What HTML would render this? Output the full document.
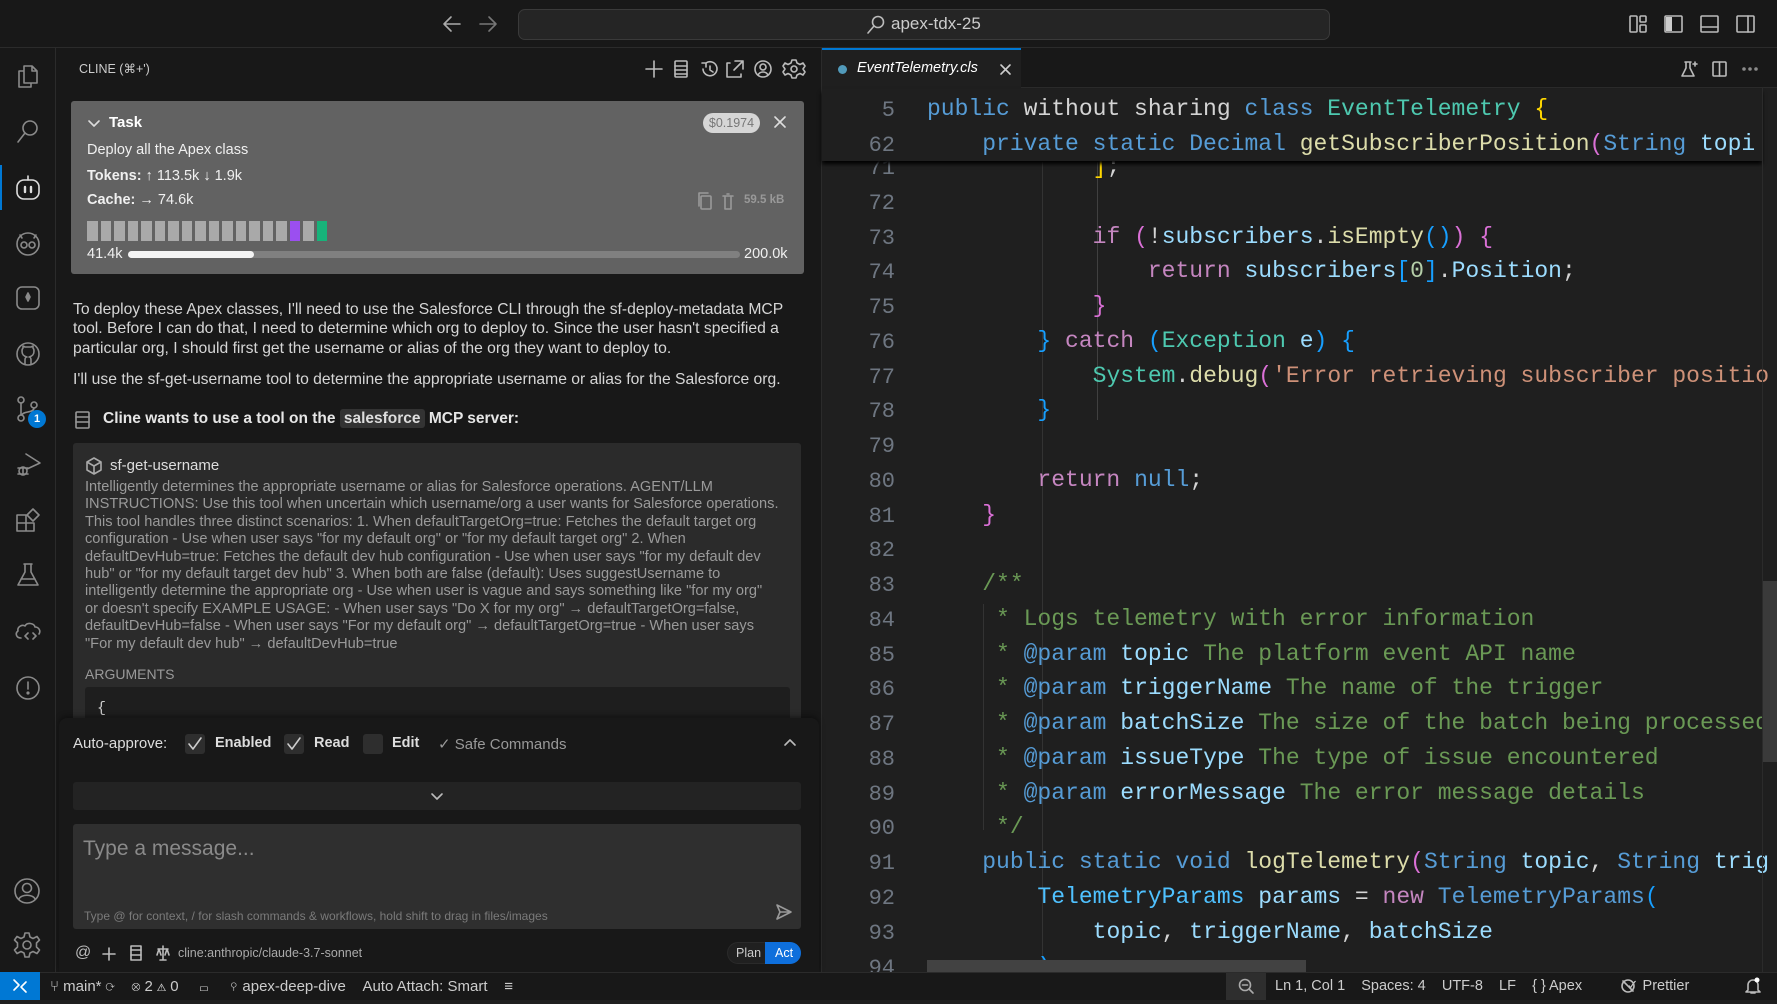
<!DOCTYPE html>
<html><head><meta charset="utf-8">
<style>
*{margin:0;padding:0;box-sizing:border-box}
body{width:1777px;height:1000px;overflow:hidden;background:#1f1f1f;font-family:"Liberation Sans",sans-serif;color:#ccc;position:relative}
.a{position:absolute}
.nw{white-space:nowrap}
svg{position:absolute;overflow:visible}
.ic{fill:none;stroke:#8a8a8a;stroke-width:1.6;stroke-linecap:round;stroke-linejoin:round}
.code{font-family:"Liberation Mono",monospace;font-size:23px;white-space:pre;color:#d4d4d4}
.ln{position:absolute;left:822px;width:73px;text-align:right;font-family:"Liberation Mono",monospace;font-size:22px;color:#6e7681}
.k{color:#569cd6}.t{color:#4ec9b0}.f{color:#dcdcaa}.v{color:#9cdcfe}.s{color:#ce9178}.c{color:#6a9955}.g{color:#ffd700}.p{color:#da70d6}.b{color:#179fff}.cf{color:#c586c0}.w{color:#d4d4d4}
#cd{position:absolute;left:0;top:4px;width:1777px;height:1000px}
</style></head><body>
<!-- title bar -->
<div class="a" style="left:0;top:0;width:1777px;height:48px;background:#181818;border-bottom:1px solid #2b2b2b"></div>
<svg style="left:442px;top:14px" width="60" height="20" class="ic"><path d="M2 10H18M2 10L9 3M2 10L9 17" stroke="#aaa"/><path d="M38 10H54M54 10L47 3M54 10L47 17" stroke="#777"/></svg>
<div class="a" style="left:518px;top:9px;width:812px;height:31px;background:#252525;border:1px solid #3a3a3a;border-radius:7px"></div>
<svg style="left:866px;top:15px" width="20" height="20" class="ic"><circle cx="12" cy="7" r="5.5" stroke="#bbb"/><path d="M8 11L2 18" stroke="#bbb"/></svg>
<div class="a nw" style="left:891px;top:14px;font-size:17px;color:#ccc">apex-tdx-25</div>
<svg style="left:1629px;top:14px" width="130" height="20" class="ic" stroke="#bbb"><rect x="1" y="2" width="7" height="16" rx="1" stroke="#bbb"/><rect x="11" y="2" width="6" height="6" rx="1" stroke="#bbb"/><rect x="11" y="11" width="6" height="7" rx="1" stroke="#bbb"/><rect x="36" y="2" width="17" height="16" rx="1" stroke="#bbb"/><rect x="37" y="3" width="6" height="14" fill="#ccc" stroke="none"/><rect x="72" y="2" width="17" height="16" rx="1" stroke="#bbb"/><path d="M72 13H89" stroke="#bbb"/><rect x="108" y="2" width="17" height="16" rx="1" stroke="#bbb"/><path d="M119 2V18" stroke="#bbb"/></svg>

<!-- activity bar -->
<div class="a" style="left:0;top:48px;width:56px;height:924px;background:#181818;border-right:1px solid #2b2b2b"></div>
<div class="a" style="left:0;top:165px;width:2px;height:45px;background:#0078d4"></div>
<svg style="left:15px;top:63px" width="26" height="26" class="ic"><path d="M9 3H17L22 8V20H9Z M17 3V8H22 M9 8H4V24H16V20"/></svg>
<svg style="left:15px;top:118px" width="26" height="26" class="ic"><circle cx="15" cy="10" r="7"/><path d="M10 15L3 24"/></svg>
<svg style="left:14px;top:174px" width="28" height="28" class="ic" ><rect x="3" y="6" width="22" height="19" rx="7" stroke="#ddd"/><path d="M14 6V2" stroke="#ddd"/><path d="M11 13V18M17 13V18" stroke="#ddd" stroke-width="2.4"/></svg>
<svg style="left:14px;top:230px" width="28" height="28" class="ic"><circle cx="14" cy="14" r="11"/><circle cx="10" cy="15" r="3"/><circle cx="18" cy="15" r="3"/><path d="M6 5L8 8M22 5L20 8"/></svg>
<svg style="left:15px;top:285px" width="26" height="26" class="ic"><rect x="2" y="2" width="22" height="22" rx="5"/><path d="M13 8L15 12L13 16L11 12Z" fill="#8a8a8a"/></svg>
<svg style="left:15px;top:341px" width="26" height="26" class="ic"><circle cx="13" cy="13" r="11"/><path d="M10 23V19C10 17 11 16 12 16C8 15 7 13 7 10C7 8 8 7 8 7L8 5L10 6H16L18 5V7C18 7 19 8 19 10C19 13 18 15 14 16C15 16 16 17 16 19V23"/></svg>
<svg style="left:15px;top:396px" width="26" height="26" class="ic"><circle cx="6" cy="4" r="3"/><circle cx="6" cy="22" r="3"/><circle cx="19" cy="9" r="3"/><path d="M6 7V19M19 12C19 17 8 15 7 19"/></svg>
<div class="a" style="left:28px;top:410px;width:18px;height:18px;border-radius:9px;background:#0078d4;color:#fff;font-size:11px;font-weight:bold;text-align:center;line-height:18px">1</div>
<svg style="left:14px;top:451px" width="28" height="28" class="ic"><path d="M12 3L26 12L13 18"/><circle cx="9" cy="20" r="4"/><path d="M4 17H14M4 23H14M9 16V24"/></svg>
<svg style="left:15px;top:507px" width="26" height="26" class="ic"><path d="M2 8H11V24H2Z M2 16H19V24H11"/><path d="M18 2L24 8L18 14L12 8Z"/></svg>
<svg style="left:15px;top:562px" width="26" height="26" class="ic"><path d="M9 2H17M10 2V10L3 23H23L16 10V2M6 17H20"/></svg>
<svg style="left:13px;top:618px" width="30" height="26" class="ic"><path d="M8 20C3 20 2 15 5 13C4 9 9 6 12 8C14 4 21 5 22 9C26 9 28 13 26 16"/><path d="M15 15L12 18L15 21M20 15L23 18L20 21"/></svg>
<svg style="left:15px;top:675px" width="26" height="26" class="ic"><circle cx="13" cy="13" r="11"/><path d="M13 7V14"/><circle cx="13" cy="18" r="0.8" fill="#8a8a8a"/></svg>
<svg style="left:13px;top:877px" width="28" height="28" class="ic"><circle cx="14" cy="14" r="12"/><circle cx="14" cy="11" r="4.5"/><path d="M6 22C8 17 20 17 22 22"/></svg>
<svg style="left:13px;top:931px" width="28" height="28" class="ic"><circle cx="14" cy="14" r="4"/><path d="M12 2H16L17 6L20 7.5L24 5.5L26.5 9L23.5 12V16L26.5 19L24 22.5L20 20.5L17 22L16 26H12L11 22L8 20.5L4 22.5L1.5 19L4.5 16V12L1.5 9L4 5.5L8 7.5L11 6Z"/></svg>

<!-- cline panel -->
<div class="a" style="left:56px;top:48px;width:766px;height:924px;background:#181818;border-right:1px solid #2b2b2b"></div>
<div class="a nw" style="left:79px;top:61px;font-size:12.5px;color:#ccc">CLINE (⌘+')</div>
<svg style="left:645px;top:59px" width="160" height="20" class="ic" stroke="#bbb"><path d="M9 2V18M1 10H17" stroke="#bbb"/><rect x="30" y="2" width="12" height="16" rx="1" stroke="#bbb"/><path d="M30 7H42M30 11H42M30 15H42" stroke="#bbb"/><path d="M61 4A7 7 0 1 1 58 10M61 4H57M61 4V8M65 7V11L68 13" stroke="#bbb"/><path d="M85 4H82V18H96V15M90 2H98V10M98 2L89 11" stroke="#bbb"/><circle cx="118" cy="10" r="8" stroke="#bbb"/><circle cx="118" cy="8" r="3" stroke="#bbb"/><path d="M113 16C115 12 121 12 123 16" stroke="#bbb"/><circle cx="149" cy="10" r="3" stroke="#bbb"/><path d="M147 1H151L152 4L155 5.5L158 4L160 7L158 10L160 13L158 16L155 14.5L152 16L151 19H147L146 16L143 14.5L140 16L138 13L140 10L138 7L140 4L143 5.5L146 4Z" stroke="#bbb"/></svg>

<!-- task box -->
<div class="a" style="left:71px;top:101px;width:733px;height:173px;background:#626262;border-radius:3px"></div>
<svg style="left:88px;top:119px" width="12" height="10" class="ic" stroke="#ddd"><path d="M1 2L6 7L11 2" stroke="#ddd"/></svg>
<div class="a nw" style="left:109px;top:114px;font-size:15px;font-weight:bold;color:#fff">Task</div>
<div class="a nw" style="left:703px;top:113px;width:57px;height:20px;border-radius:10px;background:#d6d6d6;color:#777;font-size:12.5px;text-align:center;line-height:20px">$0.1974</div>
<svg style="left:774px;top:116px" width="12" height="12" class="ic" stroke="#ddd"><path d="M1 1L11 11M11 1L1 11" stroke="#ddd"/></svg>
<div class="a nw" style="left:87px;top:142px;font-size:14.5px;color:#f0f0f0">Deploy all the Apex class</div>
<div class="a nw" style="left:87px;top:168px;font-size:14.5px;color:#f0f0f0"><b>Tokens:</b> ↑ 113.5k ↓ 1.9k</div>
<div class="a nw" style="left:87px;top:192px;font-size:14.5px;color:#f0f0f0"><b>Cache:</b> → 74.6k</div>
<svg style="left:698px;top:192px" width="40" height="18" class="ic" stroke="#999"><rect x="3" y="4" width="10" height="13" rx="1" stroke="#999"/><path d="M1 14V1H10" stroke="#999"/><path d="M25 4H35M27 4V17H33V4M29 2H31" stroke="#999"/></svg>
<div class="a nw" style="left:744px;top:194px;font-size:11.5px;color:#999;font-weight:bold">59.5 kB</div>
<div class="a" style="left:87px;top:221px;height:20px;display:flex;gap:3px">
<i style="width:10.5px;background:#a9a9a9"></i><i style="width:10.5px;background:#a9a9a9"></i><i style="width:10.5px;background:#a9a9a9"></i><i style="width:10.5px;background:#a9a9a9"></i><i style="width:10.5px;background:#a9a9a9"></i><i style="width:10.5px;background:#a9a9a9"></i><i style="width:10.5px;background:#a9a9a9"></i><i style="width:10.5px;background:#a9a9a9"></i><i style="width:10.5px;background:#a9a9a9"></i><i style="width:10.5px;background:#a9a9a9"></i><i style="width:10.5px;background:#a9a9a9"></i><i style="width:10.5px;background:#a9a9a9"></i><i style="width:10.5px;background:#a9a9a9"></i><i style="width:10.5px;background:#a9a9a9"></i><i style="width:10.5px;background:#a9a9a9"></i><i style="width:10.5px;background:#9b4ff0"></i><i style="width:10.5px;background:#a9a9a9"></i><i style="width:10.5px;background:#17b37a"></i>
</div>
<div class="a nw" style="left:87px;top:246px;font-size:14.5px;color:#f0f0f0">41.4k</div>
<div class="a" style="left:128px;top:251px;width:612px;height:7px;border-radius:4px;background:#808080"></div>
<div class="a" style="left:128px;top:251px;width:126px;height:7px;border-radius:4px;background:#f4f4f4"></div>
<div class="a nw" style="left:744px;top:246px;font-size:14.5px;color:#f0f0f0">200.0k</div>

<!-- messages -->
<div class="a nw" style="left:73px;top:300px;font-size:15.7px;line-height:19.3px;color:#d6d6d6">To deploy these Apex classes, I'll need to use the Salesforce CLI through the sf-deploy-metadata MCP<br>tool. Before I can do that, I need to determine which org to deploy to. Since the user hasn't specified a<br>particular org, I should first get the username or alias of the org they want to deploy to.</div>
<div class="a nw" style="left:73px;top:371px;font-size:15.7px;color:#d6d6d6">I'll use the sf-get-username tool to determine the appropriate username or alias for the Salesforce org.</div>
<svg style="left:75px;top:411px" width="16" height="18" class="ic" stroke="#999"><rect x="1" y="1" width="13" height="16" rx="1" stroke="#999"/><path d="M1 6H14M1 11H14" stroke="#999"/></svg>
<div class="a nw" style="left:103px;top:410px;font-size:15.5px;font-weight:bold;color:#e6e6e6">Cline wants to use a tool on the <span style="background:#333;border-radius:3px;padding:1px 4px;color:#ddd">salesforce</span> MCP server:</div>
<div class="a" style="left:73px;top:443px;width:728px;height:290px;background:#2b2b2b;border-radius:3px"></div>
<svg style="left:86px;top:457px" width="16" height="18" class="ic" stroke="#aaa"><path d="M8 1L15 5V13L8 17L1 13V5Z M1 5L8 9L15 5M8 9V17" stroke="#aaa"/></svg>
<div class="a nw" style="left:110px;top:457px;font-size:15px;color:#ddd">sf-get-username</div>
<div class="a nw" style="left:85px;top:479px;font-size:14.6px;line-height:17.4px;color:#9a9a9a">Intelligently determines the appropriate username or alias for Salesforce operations. AGENT/LLM<br>INSTRUCTIONS: Use this tool when uncertain which username/org a user wants for Salesforce operations.<br>This tool handles three distinct scenarios: 1. When defaultTargetOrg=true: Fetches the default target org<br>configuration - Use when user says "for my default org" or "for my default target org" 2. When<br>defaultDevHub=true: Fetches the default dev hub configuration - Use when user says "for my default dev<br>hub" or "for my default target dev hub" 3. When both are false (default): Uses suggestUsername to<br>intelligently determine the appropriate org - Use when user is vague and says something like "for my org"<br>or doesn't specify EXAMPLE USAGE: - When user says "Do X for my org" → defaultTargetOrg=false,<br>defaultDevHub=false - When user says "For my default org" → defaultTargetOrg=true - When user says<br>"For my default dev hub" → defaultDevHub=true</div>
<div class="a nw" style="left:85px;top:666px;font-size:14px;color:#9a9a9a">ARGUMENTS</div>
<div class="a" style="left:85px;top:687px;width:705px;height:40px;background:#1e1e1e;border-radius:3px"></div>
<div class="a nw" style="left:97px;top:700px;font-size:15px;color:#ccc;font-family:'Liberation Mono',monospace">{</div>

<!-- bottom input area -->
<div class="a" style="left:59px;top:718px;width:760px;height:254px;background:#181818;border-radius:8px 8px 0 0;box-shadow:0 -2px 6px rgba(0,0,0,.4)"></div>
<div class="a nw" style="left:73px;top:735px;font-size:15px;color:#ddd">Auto-approve:</div>
<div class="a" style="left:185px;top:734px;width:20px;height:20px;background:#2e2e2e;border-radius:3px"></div>
<svg style="left:188px;top:737px" width="14" height="14" class="ic" stroke="#ccc"><path d="M1 7L5 12L13 1" stroke="#ccc"/></svg>
<div class="a nw" style="left:215px;top:735px;font-size:14.5px;color:#ddd;font-weight:bold">Enabled</div>
<div class="a" style="left:284px;top:734px;width:20px;height:20px;background:#2e2e2e;border-radius:3px"></div>
<svg style="left:287px;top:737px" width="14" height="14" class="ic" stroke="#ccc"><path d="M1 7L5 12L13 1" stroke="#ccc"/></svg>
<div class="a nw" style="left:314px;top:735px;font-size:14.5px;color:#ddd;font-weight:bold">Read</div>
<div class="a" style="left:363px;top:734px;width:20px;height:20px;background:#2e2e2e;border-radius:3px"></div>
<div class="a nw" style="left:392px;top:735px;font-size:14.5px;color:#ddd;font-weight:bold">Edit</div>
<div class="a nw" style="left:438px;top:735px;font-size:15px;color:#999">✓ Safe Commands</div>
<svg style="left:784px;top:738px" width="12" height="8" class="ic" stroke="#bbb"><path d="M1 7L6 2L11 7" stroke="#bbb"/></svg>
<div class="a" style="left:73px;top:782px;width:728px;height:28px;background:#232323;border-radius:3px"></div>
<svg style="left:431px;top:793px" width="12" height="8" class="ic" stroke="#bbb"><path d="M1 1L6 6L11 1" stroke="#bbb"/></svg>
<div class="a" style="left:73px;top:824px;width:728px;height:105px;background:#2f2f2f;border-radius:3px"></div>
<div class="a nw" style="left:83px;top:837px;font-size:21px;color:#8a8a8a">Type a message...</div>
<div class="a nw" style="left:84px;top:909px;font-size:12px;color:#7a7a7a">Type @ for context, / for slash commands &amp; workflows, hold shift to drag in files/images</div>
<svg style="left:776px;top:904px" width="16" height="16" class="ic" stroke="#999"><path d="M1 1L15 8L1 15L4 8Z M4 8H15" stroke="#999"/></svg>
<div class="a nw" style="left:75px;top:944px;font-size:16px;color:#bbb">@</div>
<svg style="left:102px;top:947px" width="14" height="14" class="ic" stroke="#bbb"><path d="M7 1V13M1 7H13" stroke="#bbb"/></svg>
<svg style="left:130px;top:945px" width="12" height="16" class="ic" stroke="#bbb"><rect x="1" y="1" width="10" height="14" stroke="#bbb"/><path d="M1 5H11M1 10H11" stroke="#bbb"/></svg>
<svg style="left:156px;top:945px" width="14" height="16" class="ic" stroke="#bbb"><path d="M7 1V15M2 4H12M1 10L3 4L5 10M9 10L11 4L13 10M4 15H10" stroke="#bbb"/></svg>
<div class="a nw" style="left:178px;top:946px;font-size:12.5px;color:#aaa">cline:anthropic/claude-3.7-sonnet</div>
<div class="a" style="left:727px;top:942px;width:74px;height:22px;border-radius:11px;background:#202020;border:1px solid #2a2a2a"></div>
<div class="a nw" style="left:736px;top:946px;font-size:12.5px;color:#ccc">Plan</div>
<div class="a" style="left:765px;top:942px;width:36px;height:22px;border-radius:0 11px 11px 0;background:#0e6fdc"></div>
<div class="a nw" style="left:775px;top:946px;font-size:12.5px;color:#fff">Act</div>

<!-- editor tabs -->
<div class="a" style="left:822px;top:48px;width:955px;height:40px;background:#181818;border-bottom:1px solid #2b2b2b"></div>
<div class="a" style="left:822px;top:48px;width:199px;height:41px;background:#1f1f1f;border-top:2px solid #0078d4"></div>
<div class="a" style="left:838px;top:65px;width:9px;height:9px;border-radius:5px;background:#519aba"></div>
<div class="a nw" style="left:857px;top:60px;font-size:14.5px;font-style:italic;color:#fff">EventTelemetry.cls</div>
<svg style="left:1000px;top:64px" width="11" height="11" class="ic" stroke="#ccc"><path d="M1 1L10 10M10 1L1 10" stroke="#ccc"/></svg>
<svg style="left:1680px;top:59px" width="90" height="20" class="ic" stroke="#bbb"><path d="M5 3H11M6 3V9L2 17H14L10 9V3M15 3V7M13 5H17" stroke="#bbb"/><rect x="33" y="3" width="13" height="14" rx="1" stroke="#bbb"/><path d="M39.5 3V17" stroke="#bbb"/><circle cx="64" cy="10" r="1" fill="#bbb"/><circle cx="70" cy="10" r="1" fill="#bbb"/><circle cx="76" cy="10" r="1" fill="#bbb"/></svg>

<!-- code -->
<div id="cd">
<div class="a" style="left:1042px;top:158px;width:1px;height:800px;background:#333"></div>
<div class="a" style="left:1097px;top:158px;width:1px;height:258px;background:#404040"></div>
<div class="a" style="left:983px;top:600px;width:1px;height:226px;background:#333"></div>
<div class="a" style="left:1042px;top:862px;width:1px;height:96px;background:#333"></div>

<div class="ln" style="top:152px">71</div><div class="code a" style="left:927px;top:150px">            <span class="g">]</span>;</div>
<div class="ln" style="top:187px">72</div>
<div class="ln" style="top:222px">73</div><div class="code a" style="left:927px;top:220px">            <span class="cf">if</span> <span class="p">(</span>!<span class="v">subscribers</span>.<span class="f">isEmpty</span><span class="b">()</span><span class="p">)</span> <span class="p">{</span></div>
<div class="ln" style="top:256px">74</div><div class="code a" style="left:927px;top:254px">                <span class="cf">return</span> <span class="v">subscribers</span><span class="b">[</span><span style="color:#b5cea8">0</span><span class="b">]</span>.<span class="v">Position</span>;</div>
<div class="ln" style="top:291px">75</div><div class="code a" style="left:927px;top:289px">            <span class="p">}</span></div>
<div class="ln" style="top:326px">76</div><div class="code a" style="left:927px;top:324px">        <span class="b">}</span> <span class="cf">catch</span> <span class="b">(</span><span class="t">Exception</span> <span class="v">e</span><span class="b">)</span> <span class="b">{</span></div>
<div class="ln" style="top:361px">77</div><div class="code a" style="left:927px;top:359px">            <span class="t">System</span>.<span class="f">debug</span><span class="p">(</span><span class="s">'Error retrieving subscriber positio</span></div>
<div class="ln" style="top:395px">78</div><div class="code a" style="left:927px;top:393px">        <span class="b">}</span></div>
<div class="ln" style="top:430px">79</div>
<div class="ln" style="top:465px">80</div><div class="code a" style="left:927px;top:463px">        <span class="cf">return</span> <span class="k">null</span>;</div>
<div class="ln" style="top:500px">81</div><div class="code a" style="left:927px;top:498px">    <span class="p">}</span></div>
<div class="ln" style="top:534px">82</div>
<div class="ln" style="top:569px">83</div><div class="code a c" style="left:927px;top:567px">    /**</div>
<div class="ln" style="top:604px">84</div><div class="code a c" style="left:927px;top:602px">     * Logs telemetry with error information</div>
<div class="ln" style="top:639px">85</div><div class="code a c" style="left:927px;top:637px">     * <span class="k">@param</span> <span class="v">topic</span> The platform event API name</div>
<div class="ln" style="top:673px">86</div><div class="code a c" style="left:927px;top:671px">     * <span class="k">@param</span> <span class="v">triggerName</span> The name of the trigger</div>
<div class="ln" style="top:708px">87</div><div class="code a c" style="left:927px;top:706px">     * <span class="k">@param</span> <span class="v">batchSize</span> The size of the batch being processed</div>
<div class="ln" style="top:743px">88</div><div class="code a c" style="left:927px;top:741px">     * <span class="k">@param</span> <span class="v">issueType</span> The type of issue encountered</div>
<div class="ln" style="top:778px">89</div><div class="code a c" style="left:927px;top:776px">     * <span class="k">@param</span> <span class="v">errorMessage</span> The error message details</div>
<div class="ln" style="top:812px">90</div><div class="code a c" style="left:927px;top:810px">     */</div>
<div class="ln" style="top:847px">91</div><div class="code a" style="left:927px;top:845px">    <span class="k">public static void</span> <span class="f">logTelemetry</span><span class="p">(</span><span class="k">String</span> <span class="v">topic</span>, <span class="k">String</span> <span class="v">trig</span></div>
<div class="ln" style="top:882px">92</div><div class="code a" style="left:927px;top:880px">        <span style="color:#4fc1ff">TelemetryParams</span> <span class="v">params</span> = <span class="cf">new</span> <span class="k">TelemetryParams</span><span class="b">(</span></div>
<div class="ln" style="top:917px">93</div><div class="code a" style="left:927px;top:915px">            <span class="v">topic</span>, <span class="v">triggerName</span>, <span class="v">batchSize</span></div>
<div class="ln" style="top:952px">94</div><div class="code a" style="left:927px;top:950px">        <span class="b">)</span>;</div>

<!-- sticky header -->
<div class="a" style="left:822px;top:85px;width:940px;height:72px;background:#1f1f1f;box-shadow:0 3px 4px #000"></div>
<div class="ln" style="top:94px">5</div><div class="code a" style="left:927px;top:92px"><span class="k">public</span> without sharing <span class="k">class</span> <span class="t">EventTelemetry</span> <span class="g">{</span></div>
<div class="ln" style="top:129px">62</div><div class="code a" style="left:927px;top:127px">    <span class="k">private static Decimal</span> <span class="f">getSubscriberPosition</span><span class="p">(</span><span class="k">String</span> <span class="v">topi</span></div>
</div>

<!-- scrollbars -->
<div class="a" style="left:1762px;top:88px;width:1px;height:884px;background:#2b2b2b"></div>
<div class="a" style="left:1763px;top:581px;width:14px;height:181px;background:#3a3a3a"></div>
<div class="a" style="left:927px;top:960px;width:379px;height:12px;background:#424242"></div>

<!-- status bar -->
<div class="a" style="left:0;top:972px;width:1777px;height:28px;background:#181818;border-top:1px solid #2b2b2b"></div>
<div class="a" style="left:0;top:972px;width:40px;height:28px;background:#0078d4"></div>
<svg style="left:12px;top:979px" width="16" height="14" class="ic" stroke="#fff"><path d="M2 1L7 6L2 11M14 3L9 8L14 13" stroke="#fff"/></svg>
<div class="a nw" style="left:50px;top:978px;font-size:15px;color:#ccc">⑂ main* ⟳&nbsp;&nbsp;&nbsp;&nbsp;⊗ 2 ⚠ 0&nbsp;&nbsp;&nbsp;&nbsp;&nbsp;▭&nbsp;&nbsp;&nbsp;&nbsp;&nbsp;⚲ apex-deep-dive&nbsp;&nbsp;&nbsp;&nbsp;Auto Attach: Smart&nbsp;&nbsp;&nbsp;&nbsp;≡</div>
<div class="a" style="left:1226px;top:973px;width:40px;height:27px;background:#2e2e2e"></div>
<svg style="left:1238px;top:978px" width="16" height="16" class="ic" stroke="#aaa"><circle cx="7" cy="7" r="5.5" stroke="#aaa"/><path d="M11 11L15 15M4.5 7H9.5" stroke="#aaa"/></svg>
<div class="a nw" style="left:1275px;top:978px;font-size:14.5px;color:#ccc">Ln 1, Col 1&nbsp;&nbsp;&nbsp;&nbsp;Spaces: 4&nbsp;&nbsp;&nbsp;&nbsp;UTF-8&nbsp;&nbsp;&nbsp;&nbsp;LF&nbsp;&nbsp;&nbsp;&nbsp;{ } Apex&nbsp;&nbsp;&nbsp;&nbsp;&nbsp;&nbsp;&nbsp;&nbsp;&nbsp;&nbsp;&nbsp;✓ Prettier</div>
<svg style="left:1620px;top:978px" width="16" height="16" class="ic" stroke="#bbb"><circle cx="8" cy="8" r="6" stroke="#bbb"/><path d="M3 3L13 13" stroke="#bbb"/></svg>
<svg style="left:1745px;top:977px" width="16" height="18" class="ic" stroke="#bbb"><path d="M3 13V8A5 5 0 0 1 13 8V13L15 15H1L3 13M6 16H10" stroke="#bbb"/><circle cx="12" cy="3" r="2.5" fill="#fff" stroke="none"/></svg>
</body></html>
